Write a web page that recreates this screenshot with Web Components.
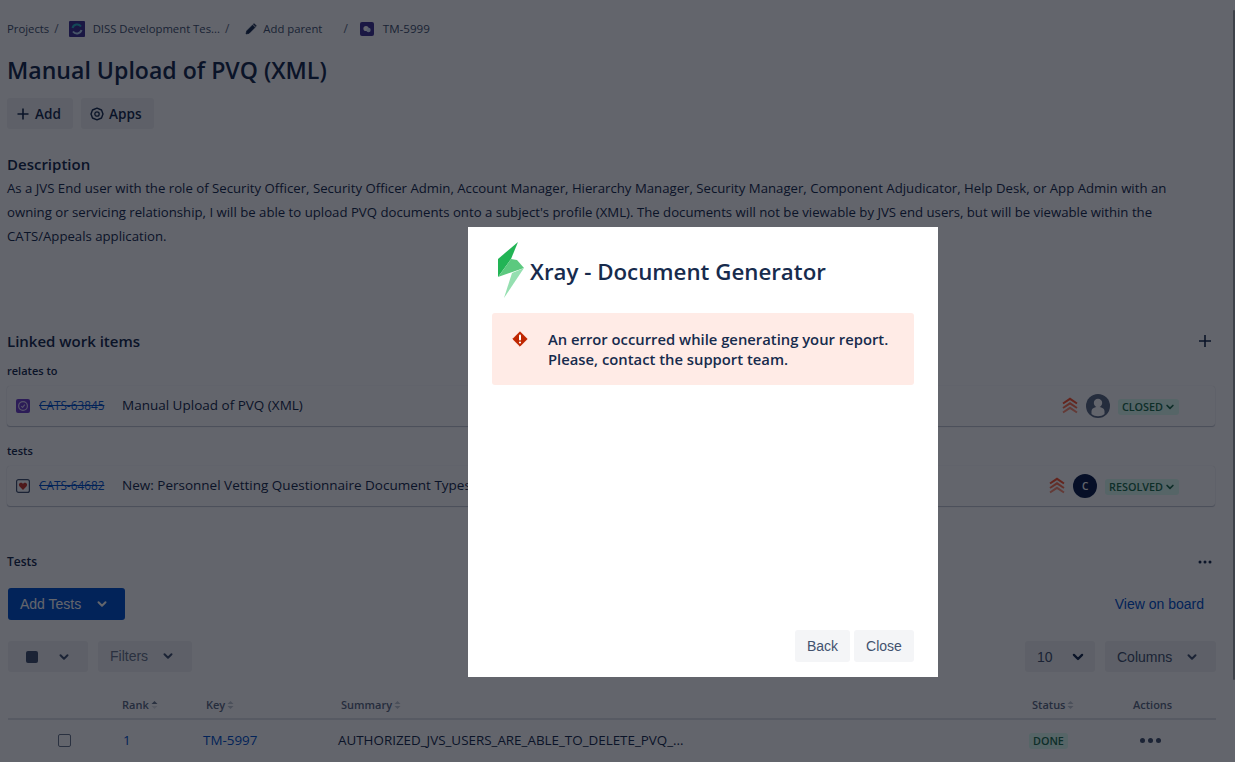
<!DOCTYPE html>
<html lang="en"><head><meta charset="utf-8"><title>TM-5999</title>
<style>
html,body{margin:0;height:762px;overflow:hidden;background:#fff}
body{font-family:"Open Sans","Noto Sans",sans-serif;color:#172B4D;font-size:13.5px}
</style></head><body>
<issue-page></issue-page>
<error-dialog></error-dialog>
<script>
const UI='"Open Sans","Noto Sans",sans-serif', AR='"Liberation Sans",sans-serif';
const chev=(c='currentColor',s=12)=>`<svg width="${s}" height="${s}" viewBox="0 0 12 12" style="display:block"><path d="M2.5 4.2 6 7.7l3.5-3.5" fill="none" stroke="${c}" stroke-width="2" stroke-linecap="round" stroke-linejoin="round"/></svg>`;
const sortI=(up='#C1C7D0',dn='#C1C7D0')=>`<svg width="7" height="10" viewBox="0 0 7 10" style="display:block;margin-left:2px"><path d="M3.5 1 6.5 4H.5z" fill="${up}"/><path d="M3.5 9 .5 6h6z" fill="${dn}"/></svg>`;
function def(name,render){customElements.define(name,class extends HTMLElement{connectedCallback(){if(this.shadowRoot)return;this.attachShadow({mode:'open'}).innerHTML=render(this)}})}

def('crumb-bar',()=>`<style>
:host{display:flex;align-items:center;height:20px;font:11.3px/20px ${UI};color:#42526E;white-space:nowrap}
span{display:block}.s{color:#5E6C84;font-size:12px}
svg{display:block}
</style>
<span>Projects</span><span class="s" style="margin-left:5px">/</span>
<svg style="margin-left:10px" width="16" height="16" viewBox="0 0 16 16"><rect width="16" height="16" rx="1" fill="#403294"/><path d="M3.500 7A4.800 4.800 0 0 1 12 5.500" fill="none" stroke="#2fb6c9" stroke-width="2"/><path d="M12.500 9A4.800 4.800 0 0 1 4 10.500" fill="none" stroke="#b9d8f5" stroke-width="2"/></svg>
<span style="margin-left:8px">DISS Development Tes...</span><span class="s" style="margin-left:5px">/</span>
<svg style="margin-left:16px" width="12" height="12" viewBox="0 0 12 12"><path d="M1 11l.6-3L7.600 2l2.400 2.400-6 6zM8.400 1.200l.7-.6 2.300 2.300-.7.700z" fill="#172B4D" stroke="#172B4D" stroke-width=".6"/></svg>
<span style="margin-left:6px">Add parent</span><span class="s" style="margin-left:21px">/</span>
<svg style="margin-left:12px" width="14" height="14" viewBox="0 0 14 14"><rect width="14" height="14" rx="2" fill="#403294"/><circle cx="6" cy="6.500" r="2.600" fill="#fff"/><circle cx="8.500" cy="8" r="2.200" fill="#DEEBFF"/></svg>
<span style="margin-left:9px;font-size:11.6px">TM-5999</span>`);

def('issue-title',()=>`<style>:host{display:block;font:600 23.1px/32px ${UI};color:#172B4D;white-space:nowrap}</style><slot></slot>`);
def('ghost-btn',h=>`<style>:host{display:inline-flex;align-items:center;height:31px;box-sizing:border-box;background:#F1F2F4;border-radius:3px;font:600 13.6px/20px ${UI};color:#172B4D}</style><slot></slot>`);
def('head-2',()=>`<style>:host{display:block;font:600 15px/20px ${UI};color:#172B4D;white-space:nowrap}</style><slot></slot>`);
def('link-label',()=>`<style>:host{display:block;font:600 11px/16px ${UI};color:#172B4D}</style><slot></slot>`);
def('lozenge-tag',h=>`<style>:host{display:inline-flex;align-items:center;height:16px;box-sizing:border-box;padding:0 4px;background:#DCFFF1;border-radius:3px;font:600 10.8px/16px ${UI};color:#216E4E;white-space:nowrap}svg{margin-left:2px}</style><slot></slot>${h.hasAttribute('drop')?chev('#216E4E',10):''}`);
def('tool-box',h=>`<style>:host{display:flex;align-items:center;justify-content:space-between;box-sizing:border-box;height:31px;background:#F1F2F4;border-radius:3px;font:14px/20px ${AR};color:#42526E}</style><slot></slot>`);

def('prio-icon',()=>`<style>:host{display:block;width:16px;height:18px}svg{display:block}</style><svg width="16" height="18" viewBox="0 0 16 18" fill="none" stroke="#FF5630" stroke-width="2" stroke-linejoin="miter"><path d="M1 6.500 8 1.800l7 4.700"/><path d="M1 11 8 6.300l7 4.700" stroke="#FF7452"/><path d="M1 15.500 8 10.800l7 4.700" stroke="#FF8F73"/></svg>`);

def('linked-row',h=>{const t=h.getAttribute('kind');
const ic=t==='purple'?`<svg width="14" height="14" viewBox="0 0 14 14"><rect width="14" height="14" rx="2" fill="#6E3FC9"/><circle cx="7" cy="7" r="4.400" fill="none" stroke="#DDD0F5" stroke-width="1.200"/><path d="M5.200 7.200 6.600 8.400 8.800 5.600" fill="none" stroke="#DDD0F5" stroke-width="1.100"/></svg>`:`<svg width="14" height="14" viewBox="0 0 14 14"><rect x=".6" y=".6" width="12.800" height="12.800" rx="2" fill="#fff" stroke="#42526E" stroke-width="1.200"/><path d="M7 11 3.400 7.200C2.200 5.600 3.400 3.800 5 3.800c1 0 1.600.5 2 1.100.4-.6 1-1.100 2-1.100 1.600 0 2.800 1.800 1.600 3.400z" fill="#C9372C"/></svg>`;
const av=t==='purple'?`<svg width="24" height="24" viewBox="0 0 24 24" style="display:block"><circle cx="12" cy="12" r="12" fill="#5E6C84"/><circle cx="12" cy="9" r="4.200" fill="#fff"/><path d="M5.500 20v-2.500C5.500 14.500 8 13 12 13s6.500 1.500 6.500 4.500V20c-1.700 1.500-4 2.200-6.500 2.200S7.200 21.500 5.500 20z" fill="#fff"/></svg>`:`<span class="av">C</span>`;
return `<style>
:host{display:flex;align-items:center;height:40px;box-sizing:border-box;padding:0 36px 0 9px;margin-right:1px;background:#fff;border-radius:3px;box-shadow:0 1px 1px rgba(9,30,66,.25),0 0 1px rgba(9,30,66,.2);font:13.5px/20px ${UI};white-space:nowrap}
.ic{display:block;width:14px;height:14px}.ic svg{display:block}
.k{margin:-2px 0 0 9px;width:83px;font:11.8px/16px ${UI};color:#0052CC;text-decoration:line-through}
.t{flex:1;overflow:hidden;color:#172B4D;margin-top:-2px}
.av{display:flex;align-items:center;justify-content:center;width:24px;height:24px;border-radius:50%;background:#0B1F4B;color:#fff;font:600 10px/24px ${UI}}
.p{margin-right:8px}.a{margin-right:8px}lozenge-tag{margin-top:2px}
</style><span class="ic">${ic}</span><span class="k"><slot name="key"></slot></span><span class="t"><slot></slot></span><prio-icon class="p"></prio-icon><span class="a">${av}</span><lozenge-tag drop><slot name="status"></slot></lozenge-tag>`});

def('test-table',()=>`<style>
:host{display:block;font:13.4px/20px ${UI};color:#172B4D}
.r{display:grid;grid-template-columns:114px 84px 135px 691px 101px 1fr;white-space:nowrap}
.h{height:22px;border-bottom:2px solid #DFE1E6;font:600 11px/18px ${UI};color:#5E6C84;align-items:start;box-sizing:content-box}
.h div{display:flex;align-items:center;height:18px}
.b{align-items:center;height:40px}
.cb{width:11px;height:11px;border:1px solid #6B778C;border-radius:2px;margin-left:50px;background:#fff}
a{color:#0052CC;text-decoration:none}
.dots{display:flex;gap:3px;margin-left:7px}.dots i{width:5px;height:5px;border-radius:50%;background:#42526E;display:block}
.num{margin-left:1px}.key{margin-left:-3px}.sum{margin-left:-3px}.st{margin-left:-3px}
</style>
<div class="r h"><div></div><div>Rank${sortI('#6B778C','#DFE1E6')}</div><div>Key${sortI()}</div><div>Summary${sortI()}</div><div>Status${sortI()}</div><div>Actions</div></div>
<div class="r b"><div><div class="cb"></div></div><div class="num"><a>1</a></div><div class="key"><a>TM-5997</a></div><div class="sum">AUTHORIZED_JVS_USERS_ARE_ABLE_TO_DELETE_PVQ_...</div><div class="st"><lozenge-tag>DONE</lozenge-tag></div><div class="dots"><i></i><i></i><i></i></div></div>`);

def('issue-page',()=>`<style>
:host{display:block;position:relative;box-sizing:border-box;width:1235px;height:762px;padding:19px 19px 0 7px;overflow:hidden;background:#fff}
.btns{display:flex;gap:8px;margin-top:12px}
p{margin:2px 0 0;font:13.2px/24px ${UI};color:#172B4D;width:1168px}
.lh{display:flex;justify-content:space-between;align-items:center}
.rowa{display:flex;align-items:center;justify-content:space-between}
.th{font:600 12px/20px ${UI}}
.add{display:flex;align-items:center;height:32px;box-sizing:border-box;width:117px;padding-left:12px;background:#0052CC;border-radius:3px;color:#fff;font:14px/20px ${AR}}
.view{font:14px/20px ${AR};color:#0052CC;margin-right:12px}
.tools{display:flex;justify-content:space-between;margin:21px 0 0 1px}
.tg{display:flex;gap:10px}
.sq{width:12px;height:12px;border-radius:2px;background:#42526E;display:block}
.flt{color:#6B778C;padding-bottom:2px}
.bar{position:absolute;right:0;top:10px;width:2px;height:670px;background:#9ea2a3;border-radius:1px}
.ib{display:block;margin-right:6px}
</style>
<crumb-bar></crumb-bar>
<issue-title style="margin-top:15px">Manual Upload of PVQ (XML)</issue-title>
<div class="btns">
<ghost-btn style="width:66px;padding-left:9px"><svg class="ib" width="14" height="14" viewBox="0 0 14 14" style="margin-right:5px"><path d="M7 1.500v11M1.500 7h11" stroke="#172B4D" stroke-width="1.600"/></svg>Add</ghost-btn>
<ghost-btn style="width:73px;padding-left:9px"><svg class="ib" width="14" height="14" viewBox="0 0 14 14" style="margin-right:5px"><path d="M7 1.200 11.500 3l1.500 4-1.500 4L7 12.800 2.500 11 1 7l1.500-4z" fill="none" stroke="#172B4D" stroke-width="1.400" stroke-linejoin="round"/><circle cx="7" cy="7" r="2.200" fill="none" stroke="#172B4D" stroke-width="1.300"/></svg>Apps</ghost-btn>
</div>
<head-2 style="margin-top:25px">Description</head-2>
<p>As a JVS End user with the role of Security Officer, Security Officer Admin, Account Manager, Hierarchy Manager, Security Manager, Component Adjudicator, Help Desk, or App Admin with an owning or servicing relationship, I will be able to upload PVQ documents onto a subject's profile (XML). The documents will not be viewable by JVS end users, but will be viewable within the CATS/Appeals application.</p>
<div class="lh" style="margin-top:83px"><head-2>Linked work items</head-2><svg width="14" height="14" viewBox="0 0 14 14" style="display:block;margin-right:4px"><path d="M7 1v12M1 7h12" stroke="#172B4D" stroke-width="1.600"/></svg></div>
<link-label style="margin-top:12px">relates to</link-label>
<linked-row kind="purple" style="margin-top:7px"><span slot="key">CATS-63845</span>Manual Upload of PVQ (XML)<span slot="status">CLOSED</span></linked-row>
<link-label style="margin-top:17px">tests</link-label>
<linked-row kind="heart" style="margin-top:7px"><span slot="key">CATS-64682</span>New: Personnel Vetting Questionnaire Document Types for Upload<span slot="status">RESOLVED</span></linked-row>
<div class="rowa" style="margin-top:46px;height:20px"><span class="th">Tests</span><svg width="14" height="4" viewBox="0 0 14 4" style="display:block;margin-right:4px"><circle cx="2" cy="2" r="1.500" fill="#172B4D"/><circle cx="7" cy="2" r="1.500" fill="#172B4D"/><circle cx="12" cy="2" r="1.500" fill="#172B4D"/></svg></div>
<div class="rowa" style="margin:16px 0 0 1px"><div class="add">Add Tests<span style="margin-left:15px">${chev('#fff')}</span></div><span class="view">View on board</span></div>
<div class="tools"><div class="tg"><tool-box style="width:80px;padding:0 18px"><span class="sq"></span>${chev('#42526E')}</tool-box><tool-box class="flt" style="width:94px;padding-left:12px;padding-right:18px">Filters${chev('#42526E')}</tool-box></div><div class="tg"><tool-box style="width:70px;padding:0 10px 0 12px"><span>10</span>${chev('#172B4D',14)}</tool-box><tool-box style="width:111px;padding:0 18px 0 12px">Columns${chev()}</tool-box></div></div>
<test-table style="margin:24px 0 0 1px"></test-table>
<div class="bar"></div>`);

def('error-dialog',()=>`<style>
:host{position:fixed;inset:0;display:block;background:rgba(3,7,18,.62);z-index:10}
.d{position:absolute;left:468px;top:227px;width:470px;height:450px;box-sizing:border-box;padding:15px 24px 15px;background:#fff;display:flex;flex-direction:column}
.hd{display:flex;align-items:center;height:56px;font:600 22.3px/32px ${UI};color:#172B4D;white-space:nowrap}
.hd svg{display:block;margin:0 6px 0 6px}
.hd span{padding-top:4px}
.al{display:flex;margin-top:15px;box-sizing:border-box;height:72px;padding:16px 20px;background:#FFEBE6;border-radius:3px;font:600 14.8px/20px ${UI};color:#172B4D}
.al svg{display:block;margin:2px 20px 0 0;flex:none}
.ft{margin-top:auto;display:flex;justify-content:flex-end;gap:4px}
.bt{display:flex;align-items:center;justify-content:center;height:32px;background:#F4F5F7;border-radius:3px;font:14px/20px ${AR};color:#42526E}
</style>
<div class="d" role="dialog"><div class="hd">
<svg width="26" height="56" viewBox="0 0 26 56"><path d="M20 0 0 17V35L13 17z" fill="#22B455"/><path d="M0 35 13 17l6 1 7 8z" fill="#5CC97F"/><path d="M26 26 14 31 6 56z" fill="#95DFB0"/></svg>
<span>Xray - Document Generator</span></div>
<div class="al"><svg width="16" height="16" viewBox="0 0 16 16"><path d="M8 0 16 8 8 16 0 8z" fill="#BF2600" stroke="#BF2600" stroke-width="1" stroke-linejoin="round" transform="translate(.8 .8) scale(.9)"/><rect x="7" y="3.500" width="2" height="6" rx="1" fill="#fff"/><circle cx="8" cy="11.500" r="1.100" fill="#fff"/></svg><span>An error occurred while generating your report.<br>Please, contact the support team.</span></div>
<div class="ft"><div class="bt" style="width:55px">Back</div><div class="bt" style="width:60px">Close</div></div></div>`);
</script>
</body></html>
